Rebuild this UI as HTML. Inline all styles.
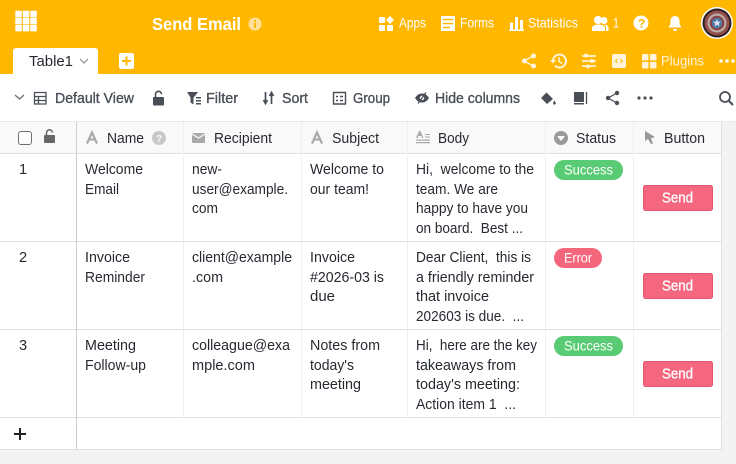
<!DOCTYPE html>
<html><head><meta charset="utf-8"><style>
html,body{margin:0;padding:0;width:736px;height:464px;overflow:hidden;background:#f3f3f3}
svg{display:block}
text{font-family:"Liberation Sans",sans-serif;white-space:pre}
.c text{font-size:14.6px;fill:#262a30}
.w text{fill:#fff;font-size:13.6px}
.t text{fill:#4a4f57;font-size:14.8px;stroke:#4a4f57;stroke-width:.35px}
.h text{fill:#262a30;font-size:14.6px}
.s{font-size:15px;fill:#fff;stroke:#fff;stroke-width:.35px}
.p{font-size:13.4px;fill:#fff}
</style></head><body>
<svg width="736" height="464" viewBox="0 0 736 464" xmlns="http://www.w3.org/2000/svg">
<rect width="736" height="464" fill="#f3f3f3"/>
<rect width="736" height="74" fill="#ffb700"/>
<rect y="74" width="736" height="48" fill="#fff"/>
<!-- logo -->
<g fill="#fff"><rect x="15.300" y="10.700" width="6.500" height="6.500" rx="1"/><rect x="22.800" y="10.700" width="6.500" height="6.500" rx=".5"/><rect x="30.300" y="10.700" width="6.500" height="6.500" rx="1"/><rect x="15.300" y="17.800" width="6.500" height="6.500"/><rect x="22.800" y="17.800" width="6.500" height="6.500"/><rect x="30.300" y="17.800" width="6.500" height="6.500"/><rect x="15.300" y="24.900" width="6.500" height="6.500" rx="1"/><rect x="22.800" y="24.900" width="6.500" height="6.500" rx=".5"/><rect x="30.300" y="24.900" width="6.500" height="6.500" rx="1"/></g>
<text x="152" y="30" font-size="17.500" font-weight="bold" fill="#fff" textLength="89" lengthAdjust="spacingAndGlyphs">Send Email</text>
<circle cx="255" cy="24" r="6.500" fill="#ffe09a"/><rect x="254" y="23" width="2" height="5" fill="#ffb700"/><rect x="254" y="20" width="2" height="2" fill="#ffb700"/>
<!-- tab -->
<path d="M13 74V51a3 3 0 0 1 3-3h79a3 3 0 0 1 3 3v23z" fill="#fff"/>
<text x="29" y="66" font-size="14.600" fill="#262a30" textLength="44" lengthAdjust="spacingAndGlyphs">Table1</text>
<path d="M80 59l4 4 4-4" fill="none" stroke="#8a8f96" stroke-width="1.200"/>
<rect x="119" y="53" width="15" height="16" rx="2" fill="#fff"/><path d="M126.500 56.500v9M122 61h9" stroke="#ffb700" stroke-width="2"/>
<!-- top right -->
<g fill="#fff">
<rect x="379" y="17" width="6" height="6" rx="1"/><rect x="379" y="25" width="6" height="6" rx="1"/><path d="M390 16l4 4-4 4-4-4z"/><rect x="387" y="25" width="6" height="6" rx="1"/>
<path d="M441 16h14v15h-14z"/>
<path d="M510 29.500v-7h3v7zM515 29.500V17h3v12.500zM520 29.500v-9.500h3v9.500z"/><rect x="509" y="29.500" width="15" height="1.500"/>
<circle cx="598" cy="20" r="4"/><circle cx="604" cy="20.500" r="3.500"/><path d="M592 31v-3c0-2 3-3.500 6.500-3.500s6.500 1.500 6.500 3.500v3zM604 24.500c3 0 4.500 1.500 4.500 3.500v3h-2.500v-3c0-1.500-1-2.500-2-3.500z"/>
<circle cx="641" cy="23" r="7.500"/>
<path d="M669 26c1.500-1 1.500-3 1.500-5 0-3 2-5 4.500-5s4.500 2 4.500 5c0 2 0 4 1.500 5v1.500h-12zM673 29h4a2 2 0 0 1-4 0z"/>
</g>
<path d="M443 19.500h10M443 23.500h10M443 27.500h7" stroke="#ffb700" stroke-width="1.500"/>
<text x="638" y="27.500" font-size="12" font-weight="bold" fill="#ffb700">?</text>
<g class="w">
<text x="399" y="27.500" textLength="27" lengthAdjust="spacingAndGlyphs">Apps</text>
<text x="460" y="27.500" textLength="34" lengthAdjust="spacingAndGlyphs">Forms</text>
<text x="528" y="27.500" textLength="50" lengthAdjust="spacingAndGlyphs">Statistics</text>
<text x="613" y="27.500" textLength="6" lengthAdjust="spacingAndGlyphs">1</text>
<text x="661" y="65.500" textLength="43" lengthAdjust="spacingAndGlyphs" opacity=".85">Plugins</text>
</g>
<!-- avatar -->
<circle cx="717" cy="23" r="16" fill="#fff"/><circle cx="717" cy="23" r="14.500" fill="#2a1f22"/><circle cx="717" cy="23" r="12.500" fill="#96504c"/><circle cx="717" cy="23" r="9.500" fill="#b9aca6"/><circle cx="717" cy="23" r="7.300" fill="#8a4140"/><circle cx="717" cy="23" r="5.300" fill="#4d7aa5"/><path d="M717 19l1 2.800h3l-2.400 1.800.9 2.900-2.500-1.700-2.500 1.700.9-2.900-2.400-1.800h3z" fill="#dfe6ee"/>
<!-- row 2 right icons -->
<g fill="#fff" opacity=".85">
<circle cx="533.500" cy="56" r="2.500"/><circle cx="533.500" cy="66" r="2.500"/><circle cx="524.500" cy="61" r="2.500"/><path d="M533 56l-9 5 9 5" fill="none" stroke="#fff" stroke-width="1.300"/>
<path d="M553 61a6.500 6.500 0 1 1 2 4.700" fill="none" stroke="#fff" stroke-width="2"/><path d="M550 60h6l-3 3.500z"/><path d="M559 57v4.500l3 2" fill="none" stroke="#fff" stroke-width="1.500"/>
<path d="M582 56h14M582 61h14M582 66h14" stroke="#fff" stroke-width="1.700"/><circle cx="586" cy="55.500" r="2"/><circle cx="592" cy="61" r="2"/><circle cx="588" cy="66.500" r="2"/>
<rect x="612" y="54" width="14" height="14" rx="2"/>
<rect x="642" y="54" width="6.500" height="6.500" rx="1"/><rect x="650" y="54" width="6.500" height="6.500" rx="1"/><rect x="642" y="62" width="6.500" height="6.500" rx="1"/><rect x="650" y="62" width="6.500" height="6.500" rx="1"/>
<circle cx="721" cy="61" r="1.900"/><circle cx="727" cy="61" r="1.900"/><circle cx="733" cy="61" r="1.900"/>
</g>
<path d="M617.500 59l-2 2 2 2M620.500 59l2 2-2 2" fill="none" stroke="#ffb700" stroke-width="1"/>
<!-- toolbar -->
<g class="t">
<text x="55" y="103" textLength="79" lengthAdjust="spacingAndGlyphs">Default View</text>
<text x="206" y="103" textLength="32" lengthAdjust="spacingAndGlyphs">Filter</text>
<text x="282" y="103" textLength="26" lengthAdjust="spacingAndGlyphs">Sort</text>
<text x="353" y="103" textLength="37" lengthAdjust="spacingAndGlyphs">Group</text>
<text x="435" y="103" textLength="85" lengthAdjust="spacingAndGlyphs">Hide columns</text>
</g>
<g fill="#4a4f57">
<path d="M15 95l4.500 4 4.500-4" fill="none" stroke="#6b7078" stroke-width="1.300"/>
<path d="M34.500 92.500h11.500v11.500h-11.500zM34.500 96.500h11.500M34.500 100.500h11.500M38.500 96.500v7.500" fill="none" stroke="#4a4f57" stroke-width="1.300"/>
<rect x="153" y="97" width="11" height="8.500" rx="1"/><path d="M155.500 97v-2.500a3 3 0 0 1 6-.3" fill="none" stroke="#4a4f57" stroke-width="1.600"/>
<path d="M187 92h11l-3 4-1.500 1.500v7l-3-2v-5z"/><rect x="196" y="97" width="5" height="1.500"/><rect x="196" y="100" width="5" height="1.500"/><rect x="196" y="103" width="5" height="1.500"/>
<path d="M265.500 92v11M263.500 100l2 3.500 2-3.500M271.500 104v-11M269.500 96l2-3.500 2 3.500" fill="none" stroke="#4a4f57" stroke-width="1.700"/>
<path d="M333.500 92.500h12v11.500h-12zM336 96.500h2M340 96.500h3M336 100.500h2M340 100.500h3" fill="none" stroke="#4a4f57" stroke-width="1.400"/>
<path d="M415 98c2-3 4-4.500 7-4.500s5 1.500 7 4.500c-2 3-4 4.500-7 4.500s-5-1.500-7-4.500z"/><circle cx="422" cy="98" r="2.200" fill="#fff"/><path d="M418 103.500l8-11" stroke="#4a4f57" stroke-width="1.300"/>
<path d="M541 98l5.500-5.500 6.500 6.500-6 5z"/><path d="M554.500 100.500c.8 1.200 1.200 2 1.200 2.800a1.300 1.300 0 0 1-2.600 0c0-.8.600-1.600 1.400-2.800z"/>
<path d="M574 92h10v10h-10zM574 103h10v1.500h-10z"/><path d="M586.500 92v12" stroke="#4a4f57" stroke-width="1.300"/>
<circle cx="617" cy="93" r="2.200"/><circle cx="617" cy="103" r="2.200"/><circle cx="608" cy="98" r="2.200"/><path d="M617 93l-9 5 9 5" fill="none" stroke="#4a4f57" stroke-width="1.200"/>
<circle cx="639" cy="98" r="1.600"/><circle cx="645" cy="98" r="1.600"/><circle cx="651" cy="98" r="1.600"/>
<circle cx="725" cy="97" r="5" fill="none" stroke="#4a4f57" stroke-width="1.800"/><path d="M729 101l4 4" stroke="#4a4f57" stroke-width="2"/>
</g>
<!-- table -->
<rect x="0" y="121" width="722" height="329" fill="#fff"/>
<rect x="722" y="122" width="14" height="342" fill="#f3f3f3"/>
<rect x="0" y="122" width="722" height="32" fill="#f9f9f9"/>
<path d="M0 121.500h736" stroke="#e8e8e8"/>
<path d="M0 153.500h722M0 241.500h722M0 329.500h722M0 417.500h722M0 449.500h722" stroke="#e0e0e0"/>
<path d="M183.500 122v296M301.500 122v296M407.500 122v296M545.500 122v296M633.500 122v296" stroke="#efefef"/>
<path d="M721.500 122v328" stroke="#e0e0e0"/>
<path d="M76.500 122v328" stroke="#cccccc"/>
<!-- header -->
<rect x="18.500" y="131.500" width="13" height="13" rx="2.500" fill="#fff" stroke="#6f6f6f"/>
<rect x="44" y="135" width="11" height="8" rx="1" fill="#666"/><path d="M46.500 135v-2a3 3 0 0 1 6-.4" fill="none" stroke="#666" stroke-width="1.500"/>
<g class="h">
<text x="107" y="143" textLength="37" lengthAdjust="spacingAndGlyphs">Name</text>
<text x="214" y="143" textLength="58" lengthAdjust="spacingAndGlyphs">Recipient</text>
<text x="332" y="143" textLength="47" lengthAdjust="spacingAndGlyphs">Subject</text>
<text x="438" y="143" textLength="31" lengthAdjust="spacingAndGlyphs">Body</text>
<text x="576" y="143" textLength="40" lengthAdjust="spacingAndGlyphs">Status</text>
<text x="664" y="143" textLength="41" lengthAdjust="spacingAndGlyphs">Button</text>
</g>
<g fill="#aaa">
<path d="M87 143.500l5-11 5 11M89 139.500h6" fill="none" stroke="#aaa" stroke-width="2.200"/>
<circle cx="159" cy="138" r="7" fill="#c8c8c8"/>
<rect x="192" y="133" width="13" height="10" rx="1"/><path d="M192 134l6.500 4 6.500-4" fill="none" stroke="#f9f9f9" stroke-width="1.200"/>
<path d="M312 143.500l5-11 5 11M314 139.500h6" fill="none" stroke="#aaa" stroke-width="2.200"/>
<path d="M416 138l3-7h1.500l3 7h-1.500l-.7-2h-3l-.7 2zM425 134h5v1h-5zM425 136.500h5v1h-5zM416 139.500h14v1.300h-14zM416 142h14v1.300h-14z"/>
<circle cx="561" cy="138" r="7" fill="#999"/><path d="M557 136h8l-4 5z" fill="#f9f9f9"/>
<path d="M645 131l10 6-4 1.500 2 5-2 .5-3-5-3 2z" fill="#999"/>
</g>
<text x="156" y="142" font-size="10" font-weight="bold" fill="#f9f9f9">?</text>
<!-- cells -->
<g class="c">
<text x="19" y="174">1</text><text x="19" y="262">2</text><text x="19" y="350">3</text>
<text x="85" y="174" textLength="58" lengthAdjust="spacingAndGlyphs">Welcome</text>
<text x="85" y="194" textLength="34" lengthAdjust="spacingAndGlyphs">Email</text>
<text x="192" y="174" textLength="30" lengthAdjust="spacingAndGlyphs">new-</text>
<text x="192" y="194" textLength="96" lengthAdjust="spacingAndGlyphs">user@example.</text>
<text x="192" y="213" textLength="26" lengthAdjust="spacingAndGlyphs">com</text>
<text x="310" y="174" textLength="74" lengthAdjust="spacingAndGlyphs">Welcome to</text>
<text x="310" y="194" textLength="59" lengthAdjust="spacingAndGlyphs">our team!</text>
<text x="416" y="174" textLength="118" lengthAdjust="spacingAndGlyphs">Hi,  welcome to the</text>
<text x="416" y="194" textLength="82" lengthAdjust="spacingAndGlyphs">team. We are</text>
<text x="416" y="213" textLength="112" lengthAdjust="spacingAndGlyphs">happy to have you</text>
<text x="416" y="233" textLength="107" lengthAdjust="spacingAndGlyphs">on board.  Best ...</text>
<text x="85" y="262" textLength="45" lengthAdjust="spacingAndGlyphs">Invoice</text>
<text x="85" y="282" textLength="60" lengthAdjust="spacingAndGlyphs">Reminder</text>
<text x="192" y="262" textLength="100" lengthAdjust="spacingAndGlyphs">client@example</text>
<text x="192" y="282" textLength="31" lengthAdjust="spacingAndGlyphs">.com</text>
<text x="310" y="262" textLength="45" lengthAdjust="spacingAndGlyphs">Invoice</text>
<text x="310" y="282" textLength="74" lengthAdjust="spacingAndGlyphs">#2026-03 is</text>
<text x="310" y="301" textLength="25" lengthAdjust="spacingAndGlyphs">due</text>
<text x="416" y="262" textLength="115" lengthAdjust="spacingAndGlyphs">Dear Client,  this is</text>
<text x="416" y="282" textLength="118" lengthAdjust="spacingAndGlyphs">a friendly reminder</text>
<text x="416" y="301" textLength="73" lengthAdjust="spacingAndGlyphs">that invoice</text>
<text x="416" y="321" textLength="108" lengthAdjust="spacingAndGlyphs">202603 is due.  ...</text>
<text x="85" y="350" textLength="51" lengthAdjust="spacingAndGlyphs">Meeting</text>
<text x="85" y="370" textLength="61" lengthAdjust="spacingAndGlyphs">Follow-up</text>
<text x="192" y="350" textLength="98" lengthAdjust="spacingAndGlyphs">colleague@exa</text>
<text x="192" y="370" textLength="63" lengthAdjust="spacingAndGlyphs">mple.com</text>
<text x="310" y="350" textLength="70" lengthAdjust="spacingAndGlyphs">Notes from</text>
<text x="310" y="370" textLength="44" lengthAdjust="spacingAndGlyphs">today's</text>
<text x="310" y="389" textLength="51" lengthAdjust="spacingAndGlyphs">meeting</text>
<text x="416" y="350" textLength="121" lengthAdjust="spacingAndGlyphs">Hi,  here are the key</text>
<text x="416" y="370" textLength="100" lengthAdjust="spacingAndGlyphs">takeaways from</text>
<text x="416" y="389" textLength="104" lengthAdjust="spacingAndGlyphs">today's meeting:</text>
<text x="416" y="409" textLength="100" lengthAdjust="spacingAndGlyphs">Action item 1  ...</text>
</g>
<!-- pills -->
<rect x="554" y="160" width="69" height="20" rx="10" fill="#59cb74"/>
<text class="p" x="564" y="174.500" textLength="49" lengthAdjust="spacingAndGlyphs">Success</text>
<rect x="554" y="248" width="48" height="20" rx="10" fill="#f4667c"/>
<text class="p" x="564" y="262.500" textLength="28" lengthAdjust="spacingAndGlyphs">Error</text>
<rect x="554" y="336" width="69" height="20" rx="10" fill="#59cb74"/>
<text class="p" x="564" y="350.500" textLength="49" lengthAdjust="spacingAndGlyphs">Success</text>
<!-- buttons -->
<g>
<rect x="643.500" y="185.500" width="69" height="25" rx="2" fill="#f5677e" stroke="#e4566c"/>
<text class="s" x="662" y="202.500" textLength="31" lengthAdjust="spacingAndGlyphs">Send</text>
<rect x="643.500" y="273.500" width="69" height="25" rx="2" fill="#f5677e" stroke="#e4566c"/>
<text class="s" x="662" y="290.500" textLength="31" lengthAdjust="spacingAndGlyphs">Send</text>
<rect x="643.500" y="361.500" width="69" height="25" rx="2" fill="#f5677e" stroke="#e4566c"/>
<text class="s" x="662" y="378.500" textLength="31" lengthAdjust="spacingAndGlyphs">Send</text>
</g>
<!-- add row -->
<path d="M14 434h12M20 428v12" stroke="#222" stroke-width="2"/>
</svg>
</body></html>
